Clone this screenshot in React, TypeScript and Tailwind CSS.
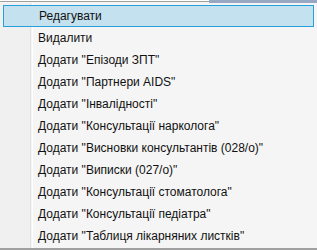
import React from 'react';

const items = [
  'Редагувати',
  'Видалити',
  'Додати "Епізоди ЗПТ"',
  'Додати "Партнери AIDS"',
  'Додати "Інвалідності"',
  'Додати "Консультації нарколога"',
  'Додати "Висновки консультантів (028/о)"',
  'Додати "Виписки (027/о)"',
  'Додати "Консультації стоматолога"',
  'Додати "Консультації педіатра"',
  'Додати "Таблиця лікарняних листків"',
];

export default function App() {
  return (
    <div className="w-[317px] h-[250px] bg-[#f5f5f5] flex flex-col overflow-hidden" style={{ fontFamily: '"Liberation Sans", Arial, sans-serif' }}>
      {/* top edge */}
      <div className="flex h-[3px] shrink-0">
        <div className="w-[209px] flex flex-col">
          <div className="h-px bg-white" />
          <div className="h-px bg-[#a0a0a0]" />
          <div className="h-px bg-[#f5f5f5]" />
        </div>
        <div className="flex-1 bg-[#99a8c2]" />
      </div>
      <div className="relative flex-1 pt-[2px]">
        {/* icon column */}
        <div className="absolute left-0 top-0 bottom-0 w-[31px] bg-[#f0f0f0] border-r border-[#e2e2e2]" />
        <div className="absolute left-[32px] top-0 bottom-0 w-px bg-white" />
        <div className="relative flex flex-col">
          {items.map((t, i) => (
            <div
              key={t}
              className={`h-[22px] ml-[3px] mr-[3px] flex items-center pl-[35px] pb-px text-[12px] text-[#111] ${
                i === 0 ? 'bg-[#c4e1ef] border border-[#26a0da] pl-[34px]' : ''
              }`}
            >
              {t}
            </div>
          ))}
        </div>
      </div>
      <div className="h-[2px] bg-[#a0a0a0] shrink-0" />
    </div>
  );
}
